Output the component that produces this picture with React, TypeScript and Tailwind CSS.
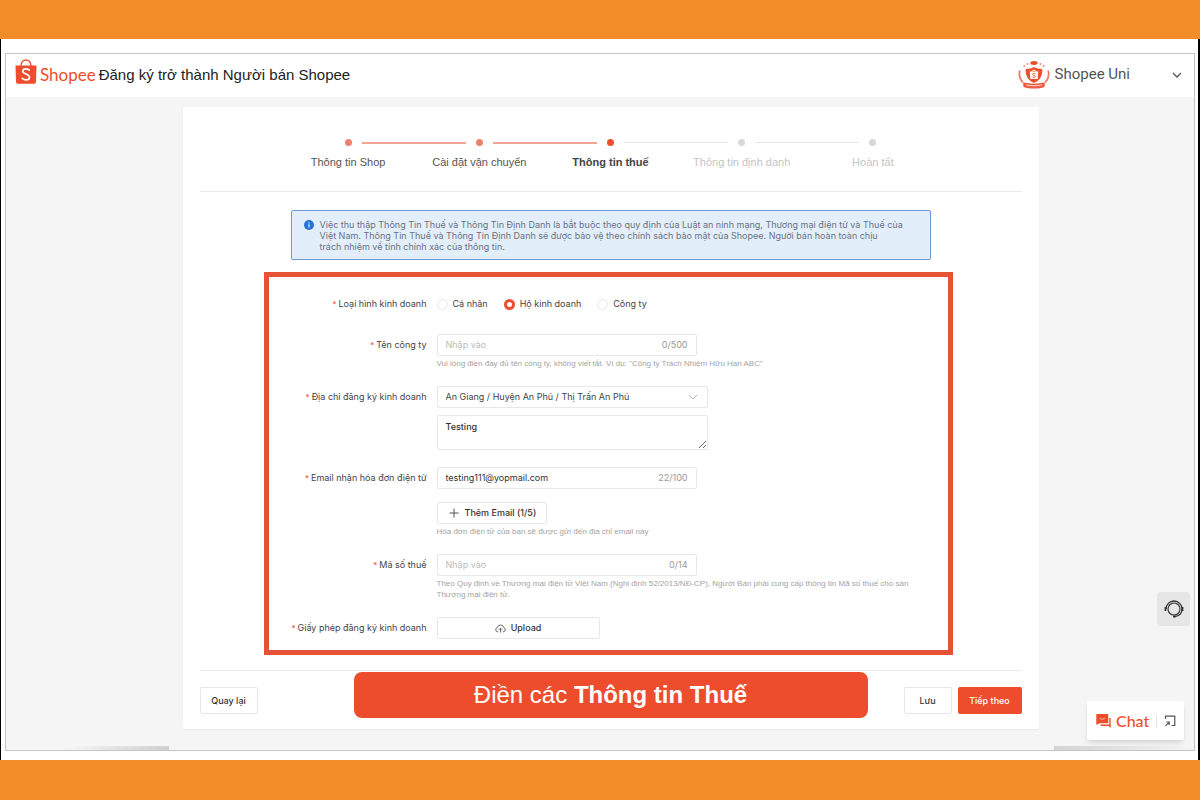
import { useState } from "react";
import type { ReactNode } from "react";

type StepState = "done" | "current" | "todo";

const steps: { label: string; state: StepState }[] = [
  { label: "Thông tin Shop", state: "done" },
  { label: "Cài đặt vận chuyển", state: "done" },
  { label: "Thông tin thuế", state: "current" },
  { label: "Thông tin định danh", state: "todo" },
  { label: "Hoàn tất", state: "todo" },
];

const dotClass: Record<StepState, string> = {
  done: "bg-[#ee8070]",
  current: "bg-[#ee4d2d]",
  todo: "bg-[#d8d8d8]",
};

const stepTextClass: Record<StepState, string> = {
  done: "text-[#555555]",
  current: "font-bold text-[#444444]",
  todo: "text-[#c4c4c4]",
};

function BagLogo() {
  return (
    <svg className="h-[26px] w-[22px]" viewBox="0 0 22 26" fill="none" aria-hidden="true">
      <path d="M6 7C6.3 3.2 8.2 1 11 1s4.700 2.200 5 6" stroke="#ee4d2d" strokeWidth="1.300" />
      <path d="M.5 6.500h21l-.5 16.600a1.800 1.800 0 0 1-1.800 1.700H2.800a1.800 1.800 0 0 1-1.800-1.700z" fill="#ee4d2d" />
      <path
        d="M14.300 11.200c-1.300-1-2.400-1.300-3.500-1.300-1.800 0-3 .9-3 2.300 0 3.300 6.700 2.300 6.700 6 0 1.600-1.400 2.700-3.400 2.700-1.500 0-2.800-.5-3.900-1.500"
        stroke="#fff"
        strokeWidth="1.600"
        strokeLinecap="round"
      />
    </svg>
  );
}

function UniBadge() {
  return (
    <svg className="h-[30px] w-8" viewBox="0 0 32 30" fill="none" aria-hidden="true">
      <ellipse cx="16" cy="3" rx="3.700" ry="1.900" fill="#ee4d2d" />
      <g fill="#f08a72">
        <circle cx="9.500" cy="4" r="1" />
        <circle cx="22.500" cy="4" r="1" />
        <circle cx="6.300" cy="6" r=".9" />
        <circle cx="25.700" cy="6" r=".9" />
      </g>
      <path d="M1.800 10.500c-1.200 4.500-.2 8.500 3 12" stroke="#ee7a62" strokeWidth="1.700" />
      <path d="M30.200 10.500c1.200 4.500.2 8.500-3 12" stroke="#ee7a62" strokeWidth="1.700" />
      <path d="M16 7c2.700 1.400 5.300 1.900 8.300 1.900.3 6.300-1.800 11-8.300 14-6.500-3-8.600-7.700-8.300-14C10.700 8.900 13.300 8.400 16 7z" fill="#ee4d2d" />
      <path d="M11.800 11.500h8.400l-.5 7.500h-7.400z" fill="#fff" />
      <path d="M13.700 12c.2-2.400 4.400-2.400 4.600 0" stroke="#fff" />
      <path d="M17.600 13.800c-1.600-1-3-.4-3 .5 0 1.300 3 .8 3 2.200 0 1-1.800 1.400-3.200.4" stroke="#ee4d2d" strokeWidth=".9" />
      <path d="M5 22.500l4.500.6c4 1 9 1 13 0l4.500-.6-.5 4.500c-6 2-15 2-21 0z" fill="#ee5a3e" />
      <path d="M8 24.800c5 1.300 11 1.300 16 0" stroke="#fff" strokeWidth=".8" />
    </svg>
  );
}

function Stepper() {
  return (
    <ol className="mx-auto flex max-w-[656px]">
      {steps.map((step, i) => (
        <li key={step.label} className="flex flex-1 flex-col items-center">
          <div className="flex w-full items-center">
            <span className="flex-1" />
            <span className={`size-[7px] rounded-full ${dotClass[step.state]}`} />
            <span className="flex min-w-0 flex-1">
              {i < steps.length - 1 && (
                <span
                  className={`ml-2.5 w-[104px] shrink-0 ${i < 2 ? "h-0.5 bg-[#f4a497]" : "h-px bg-[#e6e6e6]"}`}
                />
              )}
            </span>
          </div>
          <span className={`mt-2 text-[11px] leading-4 whitespace-nowrap ${stepTextClass[step.state]}`}>{step.label}</span>
        </li>
      ))}
    </ol>
  );
}

function Row({ label, htmlFor, children }: { label: string; htmlFor?: string; children: ReactNode }) {
  return (
    <div className="flex gap-[10px]">
      <label
        htmlFor={htmlFor}
        className="flex h-[22px] w-[158px] shrink-0 items-center justify-end gap-0.5 whitespace-nowrap text-[#444444]"
      >
        <span className="text-[8px] text-[#ee4d2d]">*</span>
        {label}
      </label>
      <div className="min-w-0 flex-1">{children}</div>
    </div>
  );
}

function CountedInput({ id, initial = "", count, max }: { id: string; initial?: string; count?: number; max: number }) {
  const [value, setValue] = useState(initial);
  const used = count !== undefined && value === initial ? count : value.length;
  return (
    <div className="flex h-[22px] max-w-[260px] items-center rounded-xs border border-[#e8e8e8] px-2">
      <input
        id={id}
        value={value}
        maxLength={max}
        placeholder="Nhập vào"
        onChange={(e) => setValue(e.target.value)}
        className="min-w-0 flex-1 bg-transparent text-[#333333] outline-none placeholder:text-[#bbbbbb]"
      />
      <span className="text-[#999999]">
        {used}/{max}
      </span>
    </div>
  );
}

function Hint({ children }: { children: ReactNode }) {
  return (
    <p className="mt-0.5 font-['Liberation_Sans',Arial,sans-serif] text-[8px] leading-[11px] text-[#a3a3a3]">
      {children}
    </p>
  );
}

function TaxForm() {
  const [kind, setKind] = useState("Hộ kinh doanh");
  return (
    <section className="mt-3 mr-[69px] ml-16 flex flex-col gap-[17px] border-5 border-[#e65236] pt-3.5 pr-6 pb-[11px] font-[Inter,sans-serif] text-[9px]">
      <div role="radiogroup" aria-labelledby="kind-label" className="flex h-[26px] items-center gap-[10px]">
        <span
          id="kind-label"
          className="flex w-[158px] shrink-0 items-center justify-end gap-0.5 whitespace-nowrap text-[#444444]"
        >
          <span className="text-[8px] text-[#ee4d2d]">*</span>
          Loại hình kinh doanh
        </span>
        <div className="flex gap-4">
          {["Cá nhân", "Hộ kinh doanh", "Công ty"].map((k) => (
            <label key={k} className="flex items-center gap-[5px] text-[#444444]">
              <input
                type="radio"
                name="kind"
                checked={kind === k}
                onChange={() => setKind(k)}
                className="size-[11px] appearance-none rounded-full border border-[#e8e8e8] bg-white checked:border-[3px] checked:border-[#ee4d2d]"
              />
              {k}
            </label>
          ))}
        </div>
      </div>

      <Row label="Tên công ty" htmlFor="company">
        <CountedInput id="company" max={500} />
        <Hint>Vui lòng điền đầy đủ tên công ty, không viết tắt. Ví dụ: "Công ty Trách Nhiệm Hữu Hạn ABC"</Hint>
      </Row>

      <Row label="Địa chỉ đăng ký kinh doanh" htmlFor="region">
        <div className="grid max-w-[271px] items-center">
          <select
            id="region"
            className="col-start-1 row-start-1 h-[22px] appearance-none rounded-xs border border-[#e8e8e8] bg-white px-2 text-[#444444]"
          >
            <option>An Giang / Huyện An Phú / Thị Trấn An Phú</option>
          </select>
          <svg
            className="pointer-events-none col-start-1 row-start-1 mr-2.5 h-2 w-2.5 justify-self-end"
            viewBox="0 0 10 8"
            fill="none"
            stroke="#b5b5b5"
            aria-hidden="true"
          >
            <path d="M1 2l4 4 4-4" />
          </svg>
        </div>
        <textarea
          aria-label="Địa chỉ chi tiết"
          defaultValue="Testing"
          className="mt-[7px] block h-[35px] w-full max-w-[271px] rounded-xs border border-[#e8e8e8] px-2 pt-[5px] leading-3 font-medium text-[#333333] outline-none"
        />
      </Row>

      <Row label="Email nhận hóa đơn điện tử" htmlFor="email">
        <CountedInput id="email" initial="testing111@yopmail.com" count={22} max={100} />
        <button
          type="button"
          className="mt-[13px] flex h-[22px] items-center gap-[5px] rounded-xs border border-[#e8e8e8] px-[10px] font-medium text-[#333333]"
        >
          <svg className="size-3" viewBox="0 0 12 12" stroke="#555" aria-hidden="true">
            <path d="M6 1.500v9M1.500 6h9" />
          </svg>
          Thêm Email (1/5)
        </button>
        <Hint>Hóa đơn điện tử của bạn sẽ được gửi đến địa chỉ email này</Hint>
      </Row>

      <Row label="Mã số thuế" htmlFor="tax">
        <CountedInput id="tax" max={14} />
        <Hint>
          Theo Quy định về Thương mại điện tử Việt Nam (Nghị định 52/2013/NĐ-CP), Người Bán phải cung cấp thông tin Mã
          số thuế cho sàn Thương mại điện tử.
        </Hint>
      </Row>

      <Row label="Giấy phép đăng ký kinh doanh" htmlFor="upload">
        <button
          id="upload"
          type="button"
          className="flex h-[22px] w-[163px] items-center justify-center gap-[5px] rounded-xs border border-[#e8e8e8] font-medium text-[#333333]"
        >
          <svg className="size-[11px]" viewBox="0 0 11 11" fill="none" stroke="#555" strokeWidth=".9" aria-hidden="true">
            <path d="M3.300 8.800H2.800A2.200 2.200 0 0 1 2.300 4.500 3.300 3.300 0 0 1 8.700 4.500 2.200 2.200 0 0 1 8.200 8.800H7.700" />
            <path d="M5.500 9.500V5.200M3.900 6.800l1.600-1.600 1.600 1.600" />
          </svg>
          Upload
        </button>
      </Row>
    </section>
  );
}

export default function App() {
  return (
    <div className="flex min-h-screen flex-col bg-white font-['Liberation_Sans',Arial,sans-serif]">
      <div className="h-[39px] bg-[#f28c28]" />
      <div className="flex flex-1 flex-col border-r-2 border-l border-black pt-3.5 pr-[3px] pb-[9px] pl-1">
        <div className="relative flex flex-1 flex-col overflow-hidden border border-[#c4c4c4] bg-[#f5f5f5]">
          <header className="flex h-[43px] items-center justify-between bg-white pr-3 pl-[9px]">
            <div className="flex items-center">
              <a href="#" className="flex items-center gap-[3px] pb-2">
                <BagLogo />
                <span className="pt-1.5 font-[Lato,sans-serif] text-[17px] leading-5 text-[#ee4d2d]">Shopee</span>
              </a>
              <h1 className="pl-[3px] text-[15px] text-[#222222]">Đăng ký trở thành Người bán Shopee</h1>
            </div>
            <button
              type="button"
              className="flex items-center gap-[5px] pb-0.5 font-[Roboto,sans-serif] text-[15px] text-[#555555]"
            >
              <UniBadge />
              Shopee Uni
              <svg className="ml-[37px] h-2.5 w-2.5" viewBox="0 0 10 10" fill="none" stroke="#555" strokeWidth="1.300" aria-hidden="true">
                <path d="M1 3l4 4 4-4" />
              </svg>
            </button>
          </header>

          <main className="flex-1 pt-2.5 pb-5 pl-[21px]">
            <div className="mx-auto max-w-[856px] rounded-xs bg-white px-[17px] pt-8 pb-[11px] shadow-xs">
              <div className="border-b border-[#ebebeb] pb-[21px]">
                <Stepper />
              </div>

              <div className="mx-auto mt-[18px] flex max-w-[640px] gap-[6px] rounded-xs border border-[#6f97dd] bg-[#e3eefb] pt-2 pr-3 pb-[7px] pl-3">
                <svg className="mt-px size-[10px] shrink-0" viewBox="0 0 10 10" aria-hidden="true">
                  <circle cx="5" cy="5" r="5" fill="#2673dd" />
                  <path d="M5 4.300v3.200M5 2.300v1.100" stroke="#fff" strokeWidth="1.100" />
                </svg>
                <p className="font-[Inter,sans-serif] text-[9px] leading-[11px] text-[#6b7280]">
                  Việc thu thập Thông Tin Thuế và Thông Tin Định Danh là bắt buộc theo quy định của Luật an ninh mạng,
                  Thương mại điện tử và Thuế của
                  <br />
                  Việt Nam. Thông Tin Thuế và Thông Tin Định Danh sẽ được bảo vệ theo chính sách bảo mật của Shopee.
                  Người bán hoàn toàn chịu
                  <br />
                  trách nhiệm về tính chính xác của thông tin.
                </p>
              </div>

              <TaxForm />

              <footer className="mt-[15px] flex items-start border-t border-[#ebebeb] pt-px font-[Inter,sans-serif] text-[9px] font-medium">
                <button
                  type="button"
                  className="mt-[15px] h-[27px] w-[58px] rounded-xs border border-[#e8e8e8] text-[#333333]"
                >
                  Quay lại
                </button>
                <p className="mr-9 ml-24 flex-1 rounded-lg bg-[#ee4d2d] py-[7px] text-center font-['Liberation_Sans',Arial,sans-serif] text-[24px] leading-8 font-normal text-white">
                  Điền các <strong>Thông tin Thuế</strong>
                </p>
                <div className="mt-[15px] flex gap-[6px]">
                  <button type="button" className="h-[27px] w-12 rounded-xs border border-[#e8e8e8] text-[#333333]">
                    Lưu
                  </button>
                  <button type="button" className="h-[27px] w-16 rounded-xs bg-[#ee4d2d] text-white">
                    Tiếp theo
                  </button>
                </div>
              </footer>
            </div>
          </main>

          <div className="absolute bottom-0 left-[62px] h-1 w-[101px] bg-linear-to-r from-transparent to-[#cfcfcf]" />
          <div className="absolute right-0 bottom-0 h-1 w-[140px] bg-linear-to-r from-[#d4d4d4] to-transparent" />

          <button
            type="button"
            aria-label="Hỗ trợ"
            className="absolute right-1 bottom-[124px] flex h-[34px] w-[33px] items-center justify-center rounded-sm bg-[#e6e6e6]"
          >
            <svg className="size-5" viewBox="0 0 20 20" fill="none" stroke="#333" aria-hidden="true">
              <circle cx="10" cy="10" r="6" strokeWidth="1.100" />
              <path d="M2 10a8 8 0 0 1 16 0c0 4-2.800 7-7.500 7.600" strokeWidth="1.300" />
              <path d="M1.500 8v4M18.500 8v4" strokeWidth="1.800" />
              <circle cx="10.300" cy="17.500" r="1.300" fill="#333" stroke="none" />
            </svg>
          </button>

          <div className="absolute right-[10px] bottom-[10px] flex h-[39px] w-[97px] items-center rounded-xs bg-white pl-[9px] shadow-md">
            <button
              type="button"
              className="flex items-center gap-[5px] font-[Lato,sans-serif] text-[16px] leading-5 font-medium text-[#ee4d2d]"
            >
              <svg className="h-[15px] w-[15px]" viewBox="0 0 15 15" aria-hidden="true">
                <path d="M1 1h10.500a.8.800 0 0 1 .8.800v8.400H3.500L.3 12V1.800A.8.800 0 0 1 1 1z" fill="#ee4d2d" />
                <path d="M13.300 5h1.400v9.700L12.300 13H4.500v-1.600h8.800z" fill="#ee4d2d" />
                <path d="M3.700 5c1.400 1.700 3.800 1.700 5.200 0" stroke="#ffb9a8" strokeWidth="1.100" fill="none" />
              </svg>
              Chat
            </button>
            <span className="ml-[7px] h-3.5 w-px bg-[#e5e5e5]" />
            <button type="button" aria-label="Mở rộng" className="ml-[7px]">
              <svg className="block h-3 w-3" viewBox="0 0 12 12" fill="none" stroke="#555" strokeWidth="1.200" aria-hidden="true">
                <path d="M1.500 4V1.200h9.300v9.300H7.500" />
                <path d="M1.500 10.800L5 7.300M2.300 7H5.200v3" />
              </svg>
            </button>
          </div>
        </div>
      </div>
      <div className="h-10 bg-[#f28c28]" />
    </div>
  );
}
